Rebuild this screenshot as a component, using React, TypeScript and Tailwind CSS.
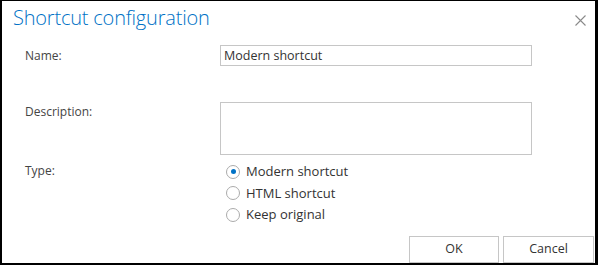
import React from "react";

function Radio({ checked, label }: { checked?: boolean; label: string }) {
  return (
    <div className="flex items-center h-[21.5px]">
      <span className="w-[14px] h-[14px] rounded-full border-[1.5px] border-[#ababab] bg-white flex items-center justify-center">
        {checked && <span className="w-[5px] h-[5px] rounded-full bg-[#0072c6]" />}
      </span>
      <span className="ml-[6px] text-[13px] text-[#333]">{label}</span>
    </div>
  );
}

export default function App() {
  return (
    <div
      className="w-[598px] h-[265px] bg-white border-t border-l-2 border-r-[3px] border-b-2 border-black flex flex-col overflow-hidden"
      style={{ fontFamily: '"Segoe UI", "Open Sans", "Liberation Sans", sans-serif' }}
    >
      <div className="flex justify-between items-start pl-[11px] pr-[8px] pt-[3px]">
        <h1 className="text-[20px] font-light text-[#0072c6] leading-[28px] tracking-[-0.2px]">
          Shortcut configuration
        </h1>
        <svg width="11" height="11" viewBox="0 0 11 11" className="mt-[11px] mr-[1px]">
          <path d="M0.5 0.5 L10.5 10.5 M10.5 0.5 L0.5 10.5" stroke="#8a8a8a" strokeWidth="1.1" />
        </svg>
      </div>

      <div className="pl-[23px] mt-[13px] flex">
        <div className="w-[195px] text-[12px] text-[#444] pt-[2px]">Name:</div>
        <div className="w-[312px] h-[21px] border border-[#c6c6c6] px-[3px] text-[12.5px] text-[#333] leading-[19px]">
          Modern shortcut
        </div>
      </div>

      <div className="pl-[23px] mt-[36px] flex">
        <div className="w-[195px] text-[12px] text-[#444] pt-[1px]">Description:</div>
        <div className="w-[312px] h-[53px] border border-[#c6c6c6]" />
      </div>

      <div className="pl-[23px] mt-[6px] flex">
        <div className="w-[201px] text-[12px] text-[#444] pt-[1px]">Type:</div>
        <div className="flex flex-col">
          <Radio checked label="Modern shortcut" />
          <Radio label="HTML shortcut" />
          <Radio label="Keep original" />
        </div>
      </div>

      <div className="flex-1" />
      <div className="flex justify-end gap-[4px] pr-[1px]">
        <button className="w-[90px] h-[27px] border border-[#c6c6c6] bg-white text-[12.5px] text-[#333]">OK</button>
        <button className="w-[91px] h-[27px] border border-[#c6c6c6] bg-white text-[12.5px] text-[#333]">Cancel</button>
      </div>
    </div>
  );
}
